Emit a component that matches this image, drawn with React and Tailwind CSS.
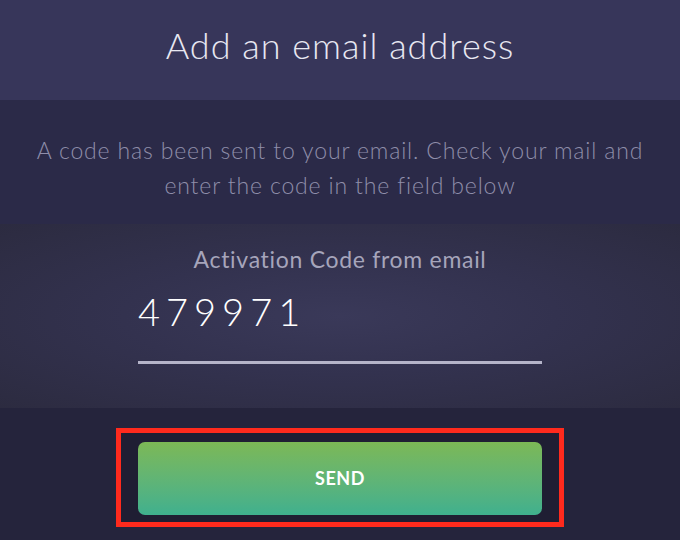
import React, { useState } from 'react'

function App() {
  const [code, setCode] = useState('479971')

  return (
    <div className="w-[680px] h-[540px] overflow-hidden bg-[#25243c] font-['Lato',sans-serif]">
      {/* header */}
      <div className="h-[100px] bg-[#37365a] flex items-center justify-center">
        <h1 className="text-[36px] font-light tracking-[1px] text-[#e8e8f2] -mt-[10px]">Add an email address</h1>
      </div>

      {/* info text */}
      <div className="h-[124px] bg-[#2b2a48] flex items-center justify-center">
        <p className="text-center text-[23px] font-light tracking-[0.85px] leading-[35px] text-[#8f8eaa] mt-[12px] whitespace-nowrap">
          A code has been sent to your email. Check your mail and<br />enter the code in the field below
        </p>
      </div>

      {/* code field */}
      <div className="h-[184px] bg-[radial-gradient(ellipse_at_center,#3a3959_0%,#33324f_45%,#2c2b40_100%)] flex flex-col items-center pt-[19px]">
        <label className="text-[23px] font-normal tracking-[0.7px] text-[#a6a5bb] leading-[32px]">Activation Code from email</label>
        <div className="w-[404px] mt-[12px]">
          <input
            value={code}
            onChange={(e) => setCode(e.target.value)}
            className="w-full bg-transparent outline-none text-[38px] font-light tracking-[6px] text-white leading-[48px] h-[48px]"
          />
          <div className="h-[3px] bg-[#b5b4c9] mt-[26px]"></div>
        </div>
      </div>

      {/* action */}
      <div className="flex justify-center pt-[20px]">
        <div className="w-[448px] h-[99px] border-[5px] border-[#ff2a1d] bg-[#1f1e33] flex items-center justify-center pt-[2px]">
          <button className="w-[404px] h-[73px] rounded-[7px] bg-gradient-to-b from-[#7cb855] to-[#3fb08e] text-white text-[18px] font-bold tracking-[0.5px]">
            SEND
          </button>
        </div>
      </div>
    </div>
  )
}

export default App
